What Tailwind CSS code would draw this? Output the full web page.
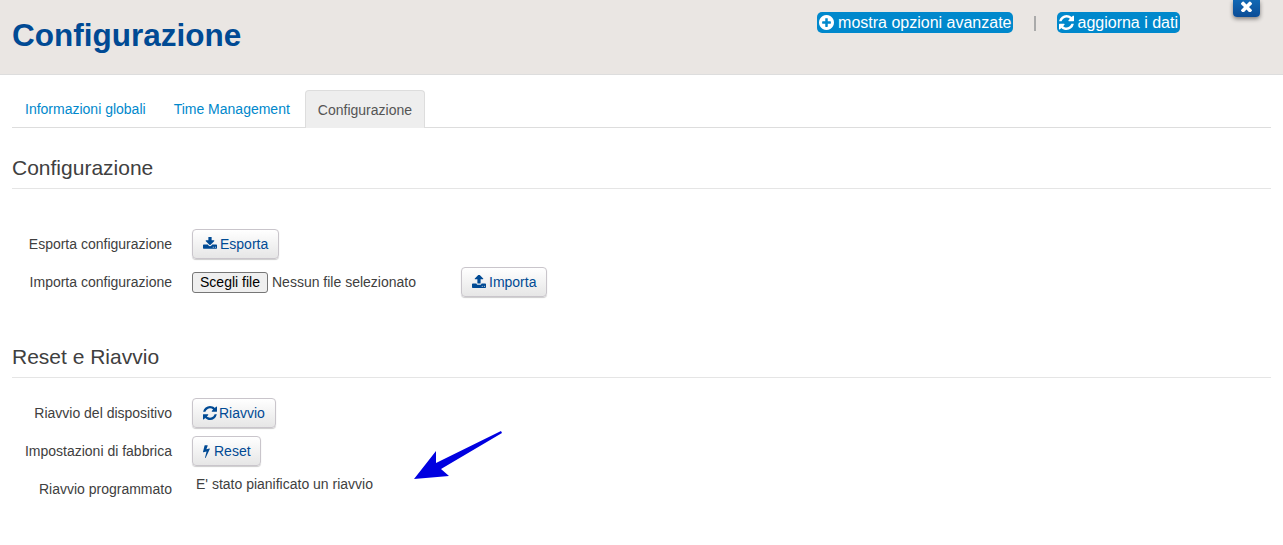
<!DOCTYPE html>
<html lang="it">
<head>
<meta charset="UTF-8" />
<meta name="viewport" content="width=device-width, initial-scale=1.0" />
<title>Configurazione</title>
<script src="https://cdn.jsdelivr.net/npm/@tailwindcss/browser@4"></script>
</head>
<body class="bg-white h-[545px] overflow-hidden relative font-['Liberation_Sans',Arial,sans-serif] text-[14px] text-[#404040]">

<!-- HEADER -->
<header class="relative h-[75px] bg-[#eae6e3] border-b border-[#dddddd] pl-3 flex justify-between">
  <h1 class="text-[31.5px] leading-[33px] font-bold text-[#004a94] pt-[19px]">Configurazione</h1>
  <div class="flex items-start pt-3 pr-[103px] text-[16px] leading-[21px] text-white">
    <a class="flex items-center h-[21px] bg-[#0088cc] rounded-[5px] px-[2px] gap-[4px]">
      <svg class="w-[15px] h-[15px] fill-white" viewBox="128 128 1536 1536"><path d="M1344 960v-128q0-26-19-45t-45-19h-256v-256q0-26-19-45t-45-19h-128q-26 0-45 19t-19 45v256h-256q-26 0-45 19t-19 45v128q0 26 19 45t45 19h256v256q0 26 19 45t45 19h128q26 0 45-19t19-45v-256h256q26 0 45-19t19-45zm320-64q0 209-103 385.5t-279.5 279.5-385.5 103-385.5-103-279.5-279.5-103-385.5 103-385.5 279.5-279.5 385.5-103 385.5 103 279.5 279.5 103 385.5z"/></svg>
      mostra opzioni avanzate
    </a>
    <span class="w-[2px] h-[15px] mt-[4px] mx-[21px] bg-[#aaaaaa]"></span>
    <a class="flex items-center h-[21px] bg-[#0088cc] rounded-[5px] px-[2px] gap-[3px]">
      <svg class="w-[15px] h-[15px] fill-white" viewBox="128 128 1536 1536"><path d="M1639 1056q0 5-1 7-64 268-268 434.5t-478 166.5q-146 0-282.5-55t-243.5-157l-129 129q-19 19-45 19t-45-19-19-45v-448q0-26 19-45t45-19h448q26 0 45 19t19 45-19 45l-137 137q71 66 161 102t187 36q134 0 250-65t186-179q11-17 53-117 8-23 30-23h192q13 0 22.5 9.5t9.5 22.5zm25-800v448q0 26-19 45t-45 19h-448q-26 0-45-19t-19-45 19-45l138-138q-148-137-349-137-134 0-250 65t-186 179q-11 17-53 117-8 23-30 23h-199q-13 0-22.5-9.5t-9.5-22.5v-7q65-268 270-434.5t480-166.5q146 0 284 55.5t245 156.5l130-129q19-19 45-19t45 19 19 45z"/></svg>
      aggiorna i dati
    </a>
  </div>
  <!-- close button, hangs off the top edge -->
  <button class="absolute top-0 left-[1233px] w-[27px] h-[17px] rounded-b-[4px] bg-gradient-to-b from-[#1268b4] to-[#0b4c96] shadow-[0_2px_4px_rgba(0,0,0,0.45)] flex items-center justify-center pb-[5px]">
    <svg class="w-[11px] h-[11px] fill-white" viewBox="300 300 1192 1192"><path d="M1490 1322q0 40-28 68l-136 136q-28 28-68 28t-68-28l-294-294-294 294q-28 28-68 28t-68-28l-136-136q-28-28-28-68t28-68l294-294-294-294q-28-28-28-68t28-68l136-136q28-28 68-28t68 28l294 294 294-294q28-28 68-28t68 28l136 136q28 28 28 68t-28 68l-294 294 294 294q28 28 28 68z"/></svg>
  </button>
</header>

<main class="px-3">
  <!-- TABS -->
  <ul class="flex h-[38px] mt-[15px] border-b border-[#dddddd] text-[#0088cc] leading-[20px]">
    <li class="px-[13px] pt-[9px] mr-[2px]">Informazioni globali</li>
    <li class="px-[13px] pt-[9px] mr-[2px]">Time Management</li>
    <li class="px-[12px] pt-[9px] h-[38px] bg-[#eeeeee] text-[#555] border border-b-0 border-[#dddddd] rounded-t-[4px]">Configurazione</li>
  </ul>

  <!-- CONFIGURAZIONE -->
  <h3 class="mt-[26px] h-[35px] text-[21px] leading-[28px] border-b border-[#e5e5e5]">Configurazione</h3>
  <div class="mt-[40px] flex flex-col gap-[8px]">
    <div class="flex items-center h-[30px]">
      <label class="w-[160px] text-right">Esporta configurazione</label>
      <button class="ml-5 h-[30px] px-[10px] flex items-center gap-[3px] text-[#004a94] border border-[#c9c5cb] rounded-[4px] bg-gradient-to-b from-white to-[#e6e6e6] shadow-[0_1px_1px_rgba(0,0,0,0.2)]">
        <svg class="w-[14px] h-[14px] fill-[#004a94]" viewBox="64 128 1664 1664"><path d="M1344 1344q0-26-19-45t-45-19-45 19-19 45 19 45 45 19 45-19 19-45zm256 0q0-26-19-45t-45-19-45 19-19 45 19 45 45 19 45-19 19-45zm128-224v320q0 40-28 68t-68 28h-1472q-40 0-68-28t-28-68v-320q0-40 28-68t68-28h465l135 136q58 56 136 56t136-56l136-136h464q40 0 68 28t28 68zm-325-569q17 41-14 70l-448 448q-18 19-45 19t-45-19l-448-448q-31-29-14-70 17-39 59-39h256v-448q0-26 19-45t45-19h256q26 0 45 19t19 45v448h256q42 0 59 39z"/></svg>
        Esporta
      </button>
    </div>
    <div class="flex items-center h-[30px]">
      <label class="w-[160px] text-right">Importa configurazione</label>
      <span class="ml-5 w-[76px] h-[21px] flex items-center justify-center text-black bg-[#efefef] border border-[#767676] rounded-[3px]">Scegli file</span>
      <span class="ml-[4px] w-[189px]">Nessun file selezionato</span>
      <button class="h-[30px] px-[10px] flex items-center gap-[3px] text-[#004a94] border border-[#c9c5cb] rounded-[4px] bg-gradient-to-b from-white to-[#e6e6e6] shadow-[0_1px_1px_rgba(0,0,0,0.2)]">
        <svg class="w-[14px] h-[14px] fill-[#004a94]" viewBox="64 128 1664 1664"><path d="M1344 1472q0-26-19-45t-45-19-45 19-19 45 19 45 45 19 45-19 19-45zm256 0q0-26-19-45t-45-19-45 19-19 45 19 45 45 19 45-19 19-45zm128-224v320q0 40-28 68t-68 28h-1472q-40 0-68-28t-28-68v-320q0-40 28-68t68-28h427q21 56 70.5 92t110.5 36h256q61 0 110.5-36t70.5-92h427q40 0 68 28t28 68zm-325-648q-17 40-59 40h-256v448q0 26-19 45t-45 19h-256q-26 0-45-19t-19-45v-448h-256q-42 0-59-40-17-39 14-69l448-448q18-19 45-19t45 19l448 448q31 30 14 69z"/></svg>
        Importa
      </button>
    </div>
  </div>

  <!-- RESET E RIAVVIO -->
  <h3 class="mt-[46px] h-[35px] text-[21px] leading-[28px] border-b border-[#e5e5e5]">Reset e Riavvio</h3>
  <div class="mt-[20px] flex flex-col gap-[8px]">
    <div class="flex items-center h-[30px]">
      <label class="w-[160px] text-right">Riavvio del dispositivo</label>
      <button class="ml-5 h-[30px] px-[10px] flex items-center gap-[2px] text-[#004a94] border border-[#c9c5cb] rounded-[4px] bg-gradient-to-b from-white to-[#e6e6e6] shadow-[0_1px_1px_rgba(0,0,0,0.2)]">
        <svg class="w-[14px] h-[14px] fill-[#004a94]" viewBox="128 128 1536 1536"><path d="M1639 1056q0 5-1 7-64 268-268 434.5t-478 166.5q-146 0-282.5-55t-243.5-157l-129 129q-19 19-45 19t-45-19-19-45v-448q0-26 19-45t45-19h448q26 0 45 19t19 45-19 45l-137 137q71 66 161 102t187 36q134 0 250-65t186-179q11-17 53-117 8-23 30-23h192q13 0 22.5 9.5t9.5 22.5zm25-800v448q0 26-19 45t-45 19h-448q-26 0-45-19t-19-45 19-45l138-138q-148-137-349-137-134 0-250 65t-186 179q-11 17-53 117-8 23-30 23h-199q-13 0-22.5-9.5t-9.5-22.5v-7q65-268 270-434.5t480-166.5q146 0 284 55.5t245 156.5l130-129q19-19 45-19t45 19 19 45z"/></svg>
        Riavvio
      </button>
    </div>
    <div class="flex items-center h-[30px]">
      <label class="w-[160px] text-right">Impostazioni di fabbrica</label>
      <button class="ml-5 h-[30px] pl-[10px] pr-[9px] flex items-center gap-[4px] text-[#004a94] border border-[#c9c5cb] rounded-[4px] bg-gradient-to-b from-white to-[#e6e6e6] shadow-[0_1px_1px_rgba(0,0,0,0.2)]">
        <svg class="w-[7px] h-[14px] fill-[#004a94]" viewBox="430 0 890 1840"><path d="M1303 611q18 20 7 44l-540 1157q-13 25-42 25-4 0-14-2-17-5-25.5-19t-4.5-30l197-808-406 101q-4 1-12 1-18 0-31-11-18-15-13-39l201-825q4-14 16-23t28-9h328q19 0 32 12.5t13 29.5q0 8-5 18l-171 463 396-98q8-2 12-2 19 0 34 15z"/></svg>
        Reset
      </button>
    </div>
    <div class="flex items-start h-[30px]">
      <label class="w-[160px] text-right pt-[5px]">Riavvio programmato</label>
      <span class="ml-[24px]">E' stato pianificato un riavvio</span>
    </div>
  </div>
</main>

<!-- annotation arrow drawn over the page -->
<svg class="absolute left-[410px] top-[428px] w-[96px] h-[54px]" viewBox="410 428 96 54">
  <polygon fill="#0000e0" points="414,479 436,451 436,463 501,431 502,433 441,469 449,476" />
</svg>

</body>
</html>
